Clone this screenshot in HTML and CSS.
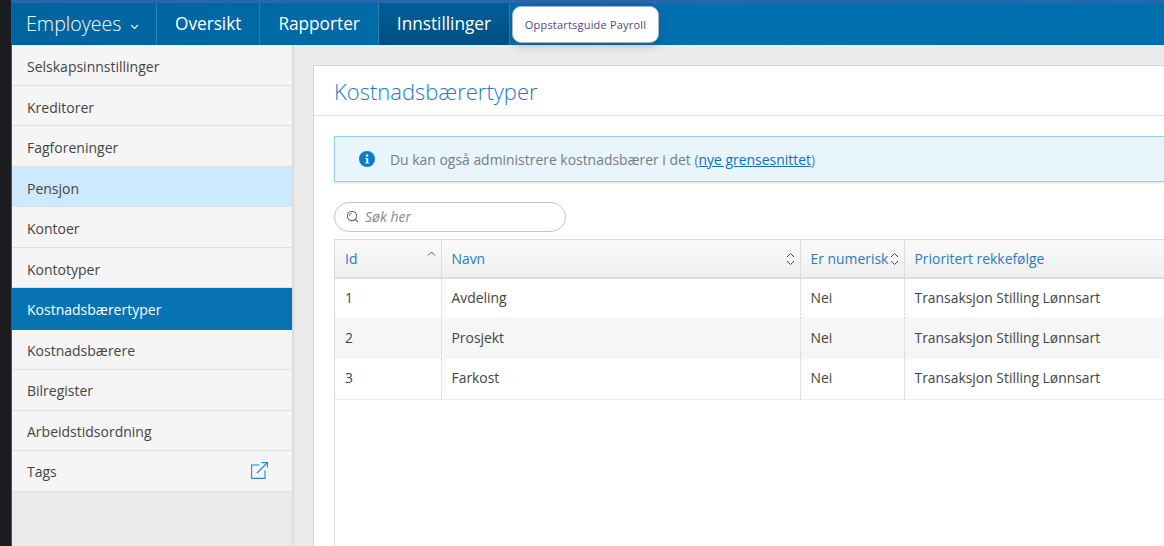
FILE: index.html
```html
<!DOCTYPE html>
<html lang="en">
<head>
    <meta charset="UTF-8">
    <meta name="viewport" content="width=device-width, initial-scale=1.0">
    <title>Kostnadsbærertyper</title>
    <link rel="stylesheet" href="styles.css">
</head>
<body>
    <div class="app">
        <nav class="topbar">
            <a class="brand">Employees
                <svg class="brand-caret" width="9" height="6" viewBox="0 0 9 6"><path d="M1 1l3.5 3.5L8 1" fill="none" stroke="#fff" stroke-width="1.1"/></svg>
            </a>
            <a class="tab">Oversikt</a>
            <a class="tab">Rapporter</a>
            <a class="tab tab-active">Innstillinger</a>
            <button class="guide-btn">Oppstartsguide Payroll</button>
        </nav>

        <div class="main">
            <aside class="sidebar">
                <ul class="side-menu">
                    <li class="side-item">Selskapsinnstillinger</li>
                    <li class="side-item">Kreditorer</li>
                    <li class="side-item">Fagforeninger</li>
                    <li class="side-item side-hover">Pensjon</li>
                    <li class="side-item">Kontoer</li>
                    <li class="side-item">Kontotyper</li>
                    <li class="side-item side-active">Kostnadsbærertyper</li>
                    <li class="side-item">Kostnadsbærere</li>
                    <li class="side-item">Bilregister</li>
                    <li class="side-item">Arbeidstidsordning</li>
                    <li class="side-item">Tags
                        <svg class="ext-icon" width="17" height="17" viewBox="0 0 17 17" fill="none" stroke="#1a8ad4" stroke-width="1.1"><path d="M8.5 3H.6v13.4h13.4V8.5"/><path d="M6 11L16 1"/><path d="M10.5.6h6v5"/></svg>
                    </li>
                </ul>
            </aside>

            <section class="content">
                <div class="card">
                    <h1 class="card-title">Kostnadsbærertyper</h1>
                    <div class="card-body">
                        <div class="alert">
                            <svg class="alert-icon" width="16" height="16" viewBox="0 0 16 16"><circle cx="8" cy="8" r="8" fill="#0b7dcb"/><rect x="7" y="3.4" width="2.2" height="2.2" fill="#fff"/><path d="M6.4 7h2.8v4.6h.9v1H6.4v-1h.9V8h-.9z" fill="#fff"/></svg>
                            <span>Du kan også administrere kostnadsbærer i det (<a class="alert-link">nye grensesnittet</a>)</span>
                        </div>

                        <div class="search">
                            <svg width="13" height="13" viewBox="0 0 13 13" fill="none" stroke="#666" stroke-width="1.1"><circle cx="6" cy="6" r="4.6"/><path d="M3.4 6A2.6 2.6 0 0 1 6 3.4" stroke-width=".8"/><path d="M9.4 9.4L12 12"/></svg>
                            <span class="search-text">Søk her</span>
                        </div>

                        <div class="table-wrap">
                            <table class="grid">
                                <thead>
                                    <tr>
                                        <th class="col-id">Id
                                            <svg class="sort" width="9" height="6" viewBox="0 0 9 6"><path d="M1 4.5L4.5 1 8 4.5" fill="none" stroke="#555" stroke-width="1"/></svg>
                                        </th>
                                        <th class="col-name">Navn
                                            <svg class="sort sort-both" width="9" height="14" viewBox="0 0 9 14" fill="none" stroke="#444" stroke-width="1"><path d="M1 5L4.5 1.5 8 5"/><path d="M1 9l3.5 3.5L8 9"/></svg>
                                        </th>
                                        <th class="col-num">Er numerisk
                                            <svg class="sort sort-both" width="9" height="14" viewBox="0 0 9 14" fill="none" stroke="#444" stroke-width="1"><path d="M1 5L4.5 1.5 8 5"/><path d="M1 9l3.5 3.5L8 9"/></svg>
                                        </th>
                                        <th>Prioritert rekkefølge</th>
                                    </tr>
                                </thead>
                                <tbody>
                                    <tr><td>1</td><td>Avdeling</td><td>Nei</td><td>Transaksjon Stilling Lønnsart</td></tr>
                                    <tr class="row-alt"><td>2</td><td>Prosjekt</td><td>Nei</td><td>Transaksjon Stilling Lønnsart</td></tr>
                                    <tr class="row-last"><td>3</td><td>Farkost</td><td>Nei</td><td>Transaksjon Stilling Lønnsart</td></tr>
                                </tbody>
                            </table>
                        </div>
                    </div>
                </div>
            </section>
        </div>
    </div>
</body>
</html>
```

FILE: styles.css
```css
* {
    box-sizing: border-box;
}
html, body {
    margin: 0;
    padding: 0;
    height: 100%;
    overflow: hidden;
}
body {
    font-family: "Open Sans", Arial, sans-serif;
    background-color: #1b1c1f;
    color: #444;
}
.app {
    height: 546px;
    margin-left: 11px;
    width: 1153px;
    background-color: #ebebeb;
    border-left: 1px solid #555;
    display: flex;
    flex-direction: column;
}
.topbar {
    height: 45px;
    flex: none;
    display: flex;
    align-items: stretch;
    border-top: 3px solid #2a66ad;
    background: linear-gradient(to right, #00649f, #0070b0 60%, #006fae);
    color: #fff;
}
.brand {
    width: 145px;
    padding-left: 14px;
    font-size: 19.6px;
    font-weight: 300;
    line-height: 42px;
    border-right: 1px solid #2a7fb3;
    white-space: nowrap;
}
.brand-caret {
    margin-left: 4px;
    vertical-align: 1px;
}
.tab {
    padding: 0 18px;
    font-size: 17.22px;
    line-height: 42px;
    border-right: 1px solid #2a7fb3;
}
.tab-active {
    background: linear-gradient(to bottom, #005f96, #004f80);
}
.guide-btn {
    align-self: flex-start;
    margin: 3px 0 0 2px;
    width: 147px;
    height: 37px;
    background-color: #fff;
    border: 1px solid #a9b4c4;
    border-radius: 9px;
    box-shadow: 0 3px 8px rgba(40, 60, 110, 0.25);
    color: #55487f;
    font-family: "Open Sans", Arial, sans-serif;
    font-size: 11px;
    font-weight: 500;
    letter-spacing: 0.2px;
    padding: 0;
}
.main {
    flex: 1;
    display: flex;
    min-height: 0;
}
.sidebar {
    width: 280px;
    flex: none;
    background-color: #ebebeb;
    box-shadow: 1px 0 3px rgba(0, 0, 0, 0.12);
}
.side-menu {
    list-style: none;
    margin: 0;
    padding: 0;
}
.side-item {
    height: 40.5px;
    padding: 3.6px 0 0 15px;
    display: flex;
    align-items: center;
    justify-content: space-between;
    font-size: 14px;
    background-color: #f5f5f5;
    border-bottom: 1px solid #e0e0e0;
}
.side-hover {
    background-color: #cce9fd;
}
.side-active {
    height: 42px;
    padding-top: 0;
    background-color: #0873b3;
    border-bottom: none;
    color: #fff;
}
.side-active ~ .side-item {
    height: 40.3px;
    padding-top: 2px;
}
.side-active ~ .side-item:last-child {
    height: 41px;
}
.ext-icon {
    margin: -2px 24px 0 0;
}
.content {
    flex: 1;
    min-width: 0;
    padding: 20px 0 0 21px;
}
.card {
    height: 100%;
    background-color: #fff;
    border: 1px solid #d6d6d6;
    border-width: 1px 0 0 1px;
}
.card-title {
    margin: 0;
    height: 50px;
    padding-left: 20px;
    font-size: 22px;
    font-weight: 300;
    line-height: 51px;
    color: #1a7cc0;
    border-bottom: 1px solid #dedede;
}
.card-body {
    padding: 20px 0 0 20px;
}
.alert {
    height: 46px;
    display: flex;
    align-items: center;
    gap: 15px;
    padding-left: 24px;
    background-color: #e8f5fd;
    border: 1px solid #8fd0f5;
    border-right: none;
    box-shadow: 0 1px 2px rgba(0, 0, 0, 0.12);
    font-size: 13.93px;
    color: #777c82;
}
.alert-link {
    color: #0f72b5;
    text-decoration: underline;
}
.search {
    margin-top: 20px;
    width: 232px;
    height: 30px;
    display: flex;
    align-items: center;
    gap: 6px;
    padding: 0 0 2px 11px;
    border: 1px solid #c4c4c4;
    border-radius: 15px;
}
.search-text {
    font-size: 14px;
    font-style: italic;
    color: #8a8a8a;
}
.table-wrap {
    margin-top: 7px;
    height: 307px;
    border-left: 1px solid #d9d9d9;
}
.grid {
    width: 830px;
    border-collapse: collapse;
    table-layout: fixed;
    font-size: 13.9px;
}
.grid th {
    position: relative;
    height: 38px;
    padding: 0 10px;
    text-align: left;
    font-weight: 400;
    color: #2b7cba;
    white-space: nowrap;
    background: linear-gradient(to bottom, #fafafa, #efefef);
    border-top: 1px solid #dcdcdc;
    border-bottom: 2px solid #dcdcdc;
    border-right: 1px solid #dcdcdc;
}
.col-id {
    width: 106px;
}
.col-name {
    width: 359px;
}
.col-num {
    width: 104px;
}
.sort {
    position: absolute;
    right: 5px;
    top: 11px;
}
.sort-both {
    top: 12px;
}
.grid td {
    height: 40.7px;
    padding: 0 10px 1px;
    border-right: 1px dotted #cfcfcf;
}
.row-alt td {
    padding-bottom: 3px;
    background-color: #f6f6f6;
}
.row-last td {
    padding-bottom: 3px;
    border-bottom: 1px solid #ececec;
}
```
